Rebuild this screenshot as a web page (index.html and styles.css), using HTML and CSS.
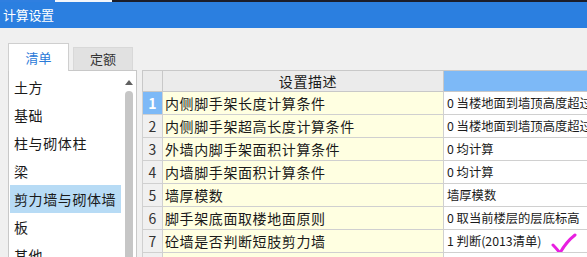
FILE: index.html
```html
<!DOCTYPE html>
<html lang="zh">
<head>
<meta charset="utf-8">
<link rel="stylesheet" href="styles.css">
</head>
<body>
<div class="window">
  <div class="topstrip"><span class="seg-blue"></span><span class="seg-white"></span><span class="seg-dark"></span></div>
  <div class="titlebar">计算设置</div>
  <div class="content">
    <div class="leftcol">
      <div class="tabs">
        <div class="tab active">清单</div>
        <div class="tab">定额</div>
      </div>
      <div class="panel">
        <ul class="list">
          <li>土方</li>
          <li>基础</li>
          <li>柱与砌体柱</li>
          <li>梁</li>
          <li class="selected">剪力墙与砌体墙</li>
          <li>板</li>
          <li>其他</li>
        </ul>
        <div class="scrollbar">
          <svg class="arrow" width="8" height="5" viewBox="0 0 8 5"><path d="M0 5 L4 0 L8 5 Z" fill="#606060"/></svg>
          <div class="thumb"></div>
        </div>
      </div>
    </div>
    <div class="gridwrap">
      <table class="grid">
        <colgroup><col class="c-num"><col class="c-desc"><col class="c-val"></colgroup>
        <thead>
          <tr><th class="h-num"></th><th class="h-desc">设置描述</th><th class="h-val"></th></tr>
        </thead>
        <tbody>
          <tr><td class="num sel">1</td><td class="desc">内侧脚手架长度计算条件</td><td class="val">0 当楼地面到墙顶高度超过3.6m时计算</td></tr>
          <tr><td class="num">2</td><td class="desc">内侧脚手架超高长度计算条件</td><td class="val">0 当楼地面到墙顶高度超过3.6m时计算</td></tr>
          <tr><td class="num">3</td><td class="desc">外墙内脚手架面积计算条件</td><td class="val">0 均计算</td></tr>
          <tr><td class="num">4</td><td class="desc">内墙脚手架面积计算条件</td><td class="val">0 均计算</td></tr>
          <tr><td class="num">5</td><td class="desc">墙厚模数</td><td class="val">墙厚模数</td></tr>
          <tr><td class="num">6</td><td class="desc">脚手架底面取楼地面原则</td><td class="val">0 取当前楼层的层底标高</td></tr>
          <tr><td class="num">7</td><td class="desc">砼墙是否判断短肢剪力墙</td><td class="val check-cell">1 判断(2013清单)<svg class="check" width="26" height="22" viewBox="0 0 26 22"><path d="M2 12 Q5 15 9 20 Q15 9 24 2" fill="none" stroke="#e81fe0" stroke-width="3" stroke-linecap="round" stroke-linejoin="round"/></svg></td></tr>
          <tr><td class="num">8</td><td class="desc"></td><td class="val"></td></tr>
        </tbody>
      </table>
    </div>
  </div>
</div>
</body>
</html>
```

FILE: styles.css
```css
html, body {
  margin: 0;
  padding: 0;
}
body {
  width: 587px;
  height: 257px;
  overflow: hidden;
  background: #f0f0f0;
  font-family: "Noto Sans CJK SC", "Noto Sans", sans-serif;
  color: #1a1a1a;
}
.window {
  width: 587px;
  height: 257px;
  overflow: hidden;
  display: flex;
  flex-direction: column;
}
.topstrip {
  height: 2px;
  display: flex;
  flex: none;
}
.seg-blue { width: 55px; background: #2f7fe0; }
.seg-white { width: 57px; background: #f4f6fa; }
.seg-dark { flex: 1; background: #1b1d2a; }
.titlebar {
  height: 26px;
  flex: none;
  background: #2b7fe0;
  color: #ffffff;
  font-size: 13px;
  line-height: 26px;
  padding-left: 3px;
  letter-spacing: -0.3px;
}
.content {
  flex: 1;
  display: flex;
  gap: 5px;
  padding-left: 8px;
  min-height: 0;
}
.leftcol {
  width: 129px;
  flex: none;
  display: flex;
  flex-direction: column;
  padding-top: 15px;
}
.tabs {
  display: flex;
  align-items: flex-end;
  gap: 4px;
  height: 27px;
  flex: none;
  position: relative;
  z-index: 1;
}
.tab {
  width: 60px;
  height: 23px;
  box-sizing: border-box;
  background: #e1e1e1;
  border: 1px solid #d8d8d8;
  border-bottom: none;
  font-size: 13px;
  line-height: 22px;
  text-align: center;
  color: #333;
}
.tab.active {
  width: 61px;
  height: 28px;
  margin-bottom: -1px;
  background: #ffffff;
  border-color: #cfcfcf;
  color: #2a7ad8;
  line-height: 27px;
}
.panel {
  flex: 1;
  background: #ffffff;
  border: 1px solid #c8c8c8;
  border-bottom: none;
  display: flex;
  min-height: 0;
}
.list {
  list-style: none;
  margin: 0;
  padding: 2px 0 0 1px;
  flex: 1;
}
.list li {
  height: 28px;
  line-height: 28px;
  font-size: 14px;
  letter-spacing: 0.6px;
  padding-left: 4px;
  white-space: nowrap;
  color: #1a1a1a;
}
.list li.selected {
  background: #b7dbf5;
}
.scrollbar {
  width: 15px;
  flex: none;
  display: flex;
  flex-direction: column;
  align-items: center;
  padding-top: 9px;
  gap: 6px;
}
.arrow { display: block; }
.thumb {
  width: 8px;
  flex: 1;
  background: #c6c6c6;
  border-radius: 4px 4px 0 0;
}
.gridwrap {
  flex: 1;
  padding-top: 42px;
  overflow: hidden;
  min-width: 0;
}
.grid {
  border-collapse: collapse;
  table-layout: fixed;
  width: 452px;
  font-size: 14px;
  letter-spacing: 0.6px;
}
.c-num { width: 20px; }
.c-desc { width: 281px; }
.c-val { width: 151px; }
.grid th, .grid td {
  border: 1px solid #d0d0d0;
  padding: 0;
  white-space: nowrap;
  overflow: hidden;
  font-weight: normal;
}
.grid th {
  height: 20px;
  background: #ebebeb;
  line-height: 20px;
  border-color: #c8c8c8;
}
.grid th.h-desc {
  text-align: center;
  padding-left: 10px;
}
.grid th.h-val {
  background: #7db9f7;
}
.grid td {
  height: 22px;
  line-height: 22px;
}
.grid td.num {
  background: #f0f0f0;
  text-align: center;
  color: #333;
  letter-spacing: 0;
}
.grid td.num.sel {
  background: #7db9f7;
  color: #ffffff;
  font-weight: bold;
}
.grid td.desc {
  background: #ffffe1;
  padding-left: 2px;
}
.grid td.val {
  background: #ffffff;
  padding-left: 3px;
  font-size: 12.3px;
  letter-spacing: 0;
  text-overflow: clip;
}
.check-cell {
  position: relative;
}
.check {
  position: absolute;
  left: 107px;
  top: 3px;
}
```
